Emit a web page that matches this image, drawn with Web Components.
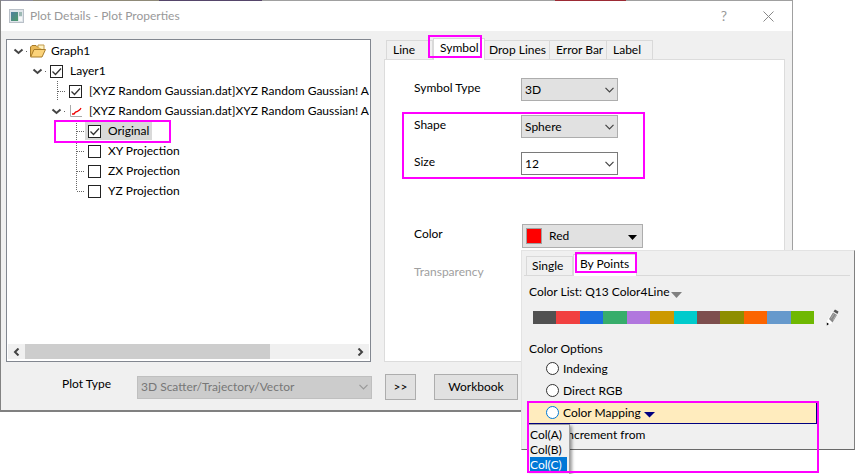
<!DOCTYPE html>
<html lang="en">
<head>
<meta charset="utf-8">
<title>Plot Details - Plot Properties</title>
<style>
  body { margin: 0; min-height: 100vh; background: #fff; color: #000; font: 12px/16px Lato, "Open Sans", sans-serif; }
</style>
</head>
<body>
<plot-dialog></plot-dialog>
<script>
const base = `
  *, *::before, *::after { box-sizing: border-box; }
  button, select, input { font: inherit; color: inherit; margin: 0; border-radius: 0; }
  button { padding: 0; border: 0; background: none; }
  svg { display: block; flex: none; }
`;
function define(name, html, setup) {
  customElements.define(name, class extends HTMLElement {
    connectedCallback() {
      if (this.shadowRoot) return;
      const t = document.createElement('template');
      t.innerHTML = typeof html === 'function' ? html(this) : html;
      this.attachShadow({ mode: 'open' }).append(t.content.cloneNode(true));
      if (setup) setup(this, this.shadowRoot);
    }
  });
}

/* Magenta frame laid over the content it points out */
define('mark-frame', `<style>
  :host { position: absolute; box-sizing: border-box; border: 2px solid #f0f; pointer-events: none; z-index: 5; }
</style>`);

define('title-bar', `<style>${base}
  :host { display: flex; align-items: center; height: 30px; padding: 0 15px 0 8px; background: #fff; color: #999; }
  h1 { flex: 1; margin: 0 0 0 6px; font: inherit; }
  button { width: 18px; height: 18px; display: grid; place-items: center; font-size: 14px; }
  button + button { margin-left: 26px; }
</style>
<svg width="15" height="14" viewBox="0 0 15 14"><defs><linearGradient id="g" x2="1" y2="1"><stop stop-color="#4f7fa0"/><stop offset="1" stop-color="#4d9a68"/></linearGradient></defs>
<rect x=".5" y=".5" width="14" height="13" fill="#dfe5ea" stroke="#b9c0c8"/><rect x="2" y="3" width="7" height="9" fill="url(#g)"/><rect x="10" y="3" width="3" height="4" fill="#9cb9b4"/><rect x="10" y="8" width="3" height="4" fill="#f6f8f8"/></svg>
<h1><slot></slot></h1>
<button aria-label="Help">?</button>
<button aria-label="Close"><svg width="11" height="11" viewBox="0 0 11 11"><path d="M.5.5l10 10M10.500.5l-10 10" stroke="#888" fill="none"/></svg></button>`);

const chevron = '<svg width="18" height="20" viewBox="0 0 18 20"><path d="M4.500 8.500L8.500 12L12.500 8.500" fill="none" stroke="#444" stroke-width="2"/><path d="M16 10.500h2" stroke="#666" stroke-dasharray="1 1"/></svg>';
const icons = {
  folder: '<svg width="16" height="14" viewBox="0 0 16 14"><path d="M.5 12.500V3L2 1.500h4L7.500 3H13v3" fill="#e9b957" stroke="#a87c2a"/><path d="M8 3V1h6v5" fill="#fff3c4" stroke="#c29a4a"/><path d="M.7 13L4 5.500h11.500L12 13z" fill="#fbd37a" stroke="#a87c2a"/></svg>',
  plot: '<svg width="14" height="12" viewBox="0 0 14 12"><path d="M2.500 0v11.500H14" fill="none" stroke="#aaa"/><path d="M4 9h2l1.500-2 2-.5L12 4.500 13 3" fill="none" stroke="#e00" stroke-width="1.300"/></svg>'
};
define('tree-row', el => {
  const level = +el.getAttribute('level'), leaf = el.hasAttribute('leaf'), last = el.hasAttribute('last');
  const icon = el.getAttribute('icon');
  return `<style>${base}
  :host { display: flex; align-items: center; height: 20px; padding-left: ${3 + 19 * level}px; white-space: nowrap; }
  .item { display: flex; align-items: center; height: 18px; padding: 0 3px 0 2px; }
  :host([selected]) .item { background: #d9d9d9; }
  .lead { display: grid; align-items: center; width: 16px; margin-right: 5px; }
  .lead > * { grid-area: 1 / 1; }
  input { appearance: none; width: 13px; height: 13px; border: 1px solid #222; background: #fff; }
  input, .tick { margin: 0 0 0 1px; }
  .tick { visibility: hidden; pointer-events: none; }
  input:checked + .tick { visibility: visible; }
</style>
${leaf ? `<svg width="18" height="20" viewBox="0 0 18 20"><path d="M9.500 0V${last ? 10 : 20}M10 10.500H18" fill="none" stroke="#666" stroke-dasharray="1 1"/></svg>` : `<button aria-label="Collapse">${chevron}</button>`}
<label class="item"><span class="lead">${icon ? icons[icon] : `<input type="checkbox" ${el.hasAttribute('checked') ? 'checked' : ''}><svg class="tick" width="13" height="13" viewBox="0 0 13 13"><path d="M2.500 6.500l3 3 5.500-6" fill="none" stroke="#333" stroke-width="1.300"/></svg>`}</span><slot></slot></label>`;
});

define('plot-tree', `<style>${base}
  :host { display: flex; flex-direction: column; position: relative; min-width: 0; box-sizing: border-box; border: 1px solid #828790; background: #fff; padding: 1px; }
  .rows { flex: 1; overflow: hidden; margin-left: -1px; }
  .bar { display: flex; height: 15px; background: #f0f0f0; align-items: stretch; margin-bottom: 1px; }
  .bar button { width: 17px; display: grid; place-items: center; }
  .track { flex: 1; }
  .thumb { width: 75%; height: 100%; background: #cdcdcd; }
  mark-frame { left: 47px; top: 80px; width: 117px; height: 23px; }
</style>
<div class="rows">
<tree-row level="0" icon="folder">Graph1</tree-row>
<tree-row level="1" checked>Layer1</tree-row>
<tree-row level="2" leaf checked>[XYZ Random Gaussian.dat]XYZ Random Gaussian! A</tree-row>
<tree-row level="2" icon="plot">[XYZ Random Gaussian.dat]XYZ Random Gaussian! A</tree-row>
<tree-row level="3" leaf checked selected>Original</tree-row>
<tree-row level="3" leaf>XY Projection</tree-row>
<tree-row level="3" leaf>ZX Projection</tree-row>
<tree-row level="3" leaf last>YZ Projection</tree-row>
</div>
<div class="bar"><button aria-label="Scroll left"><svg width="7" height="8" viewBox="0 0 7 8"><path d="M5.500.5L2 4l3.500 3.500" fill="none" stroke="#444" stroke-width="2"/></svg></button>
<div class="track"><div class="thumb"></div></div>
<button aria-label="Scroll right"><svg width="7" height="8" viewBox="0 0 7 8"><path d="M1.500.5L5 4 1.500 7.500" fill="none" stroke="#444" stroke-width="2"/></svg></button></div>
<mark-frame></mark-frame>`);

define('tab-item', `<style>${base}
  :host { display: block; position: relative; height: 19px; }
  button { width: 100%; height: 100%; padding-left: var(--tab-pad, 6px); text-align: left; white-space: nowrap; border: 1px solid #d9d9d9; border-bottom: 0; background: #f0f0f0; }
  :host([follow]) button { border-left: 0; }
  :host([selected]) { height: 22px; margin-bottom: -1px; z-index: 1; }
  :host([selected]) button { background: #fff; padding-bottom: 3px; }
</style><button role="tab"><slot></slot></button><slot name="frame"></slot>`);

define('select-box', el => `<style>${base}
  :host { display: grid; height: 23px; align-items: center; }
  :host > *, select, input, svg { grid-area: 1 / 1; }
  select, input { appearance: none; width: 100%; height: 100%; padding: 0 20px 0 3px; border: 1px solid #adadad; background: #e1e1e1; outline: 0; }
  input { background: #fff; border-color: #7a7a7a; }
  select:disabled { background: #ccc; border-color: #bfbfbf; color: #777; opacity: 1; }
  svg { justify-self: end; margin-right: 4px; pointer-events: none; color: #444; }
  :host([disabled]) svg { color: #999; }
</style>
${el.hasAttribute('editable') ? `<input type="text" value="${el.getAttribute('value')}" aria-label="${el.getAttribute('label')}">`
 : `<select aria-label="${el.getAttribute('label')}" ${el.hasAttribute('disabled') ? 'disabled' : ''}><option>${el.getAttribute('value')}</option></select>`}
<svg width="9" height="6" viewBox="0 0 9 6"><path d="M.5.800l4 4 4-4" fill="none" stroke="currentColor" stroke-width="1.200"/></svg>`);

define('form-row', `<style>
  :host { display: grid; grid-template-columns: 107px auto; justify-content: start; min-height: 23px; }
  label { padding-top: 2px; }
  :host([muted]) label { color: #a0a0a0; }
</style><label><slot name="label"></slot></label><slot></slot>`);

define('radio-row', el => `<style>${base}
  :host { display: flex; align-items: center; height: 22px; padding-left: 17px; border: solid transparent; border-width: 0 1px 1px 0; box-sizing: border-box; }
  :host([active]) { background: #ffecbe; border-color: #000080; }
  label { display: flex; align-items: center; gap: 4px; }
  input { appearance: none; width: 13px; height: 13px; border: 1px solid #333; border-radius: 50%; background: #fff; }
  :host([active]) input { border-color: #0078d7; }
  svg { margin: 4px 0 0 3px; }
</style><label><input type="radio" name="color-option"><slot></slot></label>
${el.hasAttribute('active') ? '<svg width="11" height="6" viewBox="0 0 11 6"><path d="M0 0h11L5.500 5.500z" fill="#000080"/></svg>' : ''}`);

define('color-popup', el => `<style>${base}
  :host { display: block; position: absolute; z-index: 3; background: #f0f0f0; border: 1px solid; border-color: #e3e3e3 #808080 #696969 #e3e3e3; box-sizing: border-box; padding: 2px 4px 6px 2px; }
  .tabs { display: flex; align-items: flex-end; height: 23px; padding-left: 2px; border-bottom: 1px solid #d9d9d9; }
  .body { padding: 8px 33px 0 5px; }
  .list { display: flex; align-items: center; }
  .list svg { margin: 5px 0 0 2px; }
  .list button { display: flex; align-items: center; }
  .palette { display: flex; align-items: center; margin: 8px -30px 0 4px; height: 18px; }
  .strip { display: flex; flex: 1; height: 13px; }
  .strip i { flex: 1; }
  .palette button { margin: 0 8px 0 12px; }
  .heading { margin: 15px 0 1px; }
  .options { position: relative; }
  .under { padding-left: 35px; margin-top: 3px; }
  .menu { position: absolute; left: 0; top: 66px; width: 41px; padding: 2px 2px 2px 1px; background: #f0f0f0; border: 1px solid #a0a0a0; border-left: 0; box-shadow: 2px 2px 3px #0006; line-height: 15px; display: grid; }
  .menu button { height: 15px; text-align: left; }
  .menu .on { background: #0078d7; color: #fff; }
  tab-item mark-frame { left: 2px; top: -2px; width: 62px; height: 21px; }
  .options > mark-frame { left: -2px; top: 43px; width: calc(100% + 4px); height: 72px; }
</style>
<div class="tabs" role="tablist"><tab-item style="width:47px;--tab-pad:5px">Single</tab-item><tab-item selected style="width:64px;--tab-pad:6px">By Points<mark-frame slot="frame"></mark-frame></tab-item></div>
<div class="body">
<div class="list"><button>Color List: Q13 Color4Line<svg width="11" height="6" viewBox="0 0 11 6"><path d="M0 0h11L5.500 6z" fill="#808080"/></svg></button></div>
<div class="palette"><span class="strip">${['#515151','#f14040','#1a6fdf','#37ad6b','#b177de','#cc9900','#00cbcc','#7d4e4e','#8e8e00','#fb6501','#6699cc','#6fb802'].map(c => `<i style="background:${c}"></i>`).join('')}</span>
<button aria-label="Edit colors"><svg width="13" height="17" viewBox="0 0 13 17"><path d="M1 12L6 3l5 3-5.500 8.500L1 16z" fill="#fff"/><path d="M3 10L7 3.500l4 2.500-4.500 7.500z" fill="#888"/><path d="M7.500 2.500L9 .5l3.500 2L11.500 5z" fill="#555"/><path d="M5 9.500l3-5M7 11l3-5" stroke="#bbb" stroke-width=".7"/><path d="M.8 13.500L3 15 .8 16.500z" fill="#000"/></svg></button></div>
<div class="heading">Color Options</div>
<div class="options">
<radio-row>Indexing</radio-row><radio-row>Direct RGB</radio-row><radio-row active>Color Mapping</radio-row>
<div class="under">Increment from</div>
<div class="menu"><button>Col(A)</button><button>Col(B)</button><button class="on">Col(C)</button></div>
<mark-frame></mark-frame>
</div></div>`);

define('color-field', `<style>${base}
  :host { display: block; position: relative; margin-left: 1px; }
  .pick { display: flex; align-items: center; width: 121px; height: 24px; padding: 0 5px 0 3px; border: 1px solid #adadad; background: #e1e1e1; text-align: left; }
  i { width: 16px; height: 16px; margin-right: 7px; background: red; border: 1px solid #a0a0a0; }
  span { flex: 1; }
  svg { margin-top: 3px; }
  color-popup { left: -1px; top: 26px; width: 334px; }
</style><button class="pick" aria-label="Color"><i></i><span>Red</span><svg width="9" height="5" viewBox="0 0 9 5"><path d="M0 0h9L4.500 5z"/></svg></button><color-popup></color-popup>`);

define('symbol-page', `<style>${base}
  :host { display: flex; flex-direction: column; min-width: 0; padding-top: 1px; }
  .tabs { display: flex; align-items: flex-end; padding-left: 2px; height: 19px; position: relative; z-index: 1; }
  .panel { position: relative; flex: 1; display: flex; flex-direction: column; gap: 14px; padding: 18px 29px; border: 1px solid #dcdcdc; background: #fff; }
  select-box { width: 97px; }
  .color { margin-top: 35px; }
  .panel > mark-frame { left: 17px; top: 52px; width: 243px; height: 67px; }
  tab-item mark-frame { left: -5px; top: -3px; width: 54px; height: 23px; }
</style>
<div class="tabs" role="tablist">
<tab-item style="width:47px">Line</tab-item><tab-item selected style="width:52px">Symbol<mark-frame slot="frame"></mark-frame></tab-item><tab-item follow style="width:65px;--tab-pad:4px">Drop Lines</tab-item><tab-item follow style="width:57px">Error Bar</tab-item><tab-item follow style="width:46px">Label</tab-item></div>
<div class="panel">
<form-row><span slot="label">Symbol Type</span><select-box label="Symbol Type" value="3D"></select-box></form-row>
<form-row><span slot="label">Shape</span><select-box label="Shape" value="Sphere"></select-box></form-row>
<form-row><span slot="label">Size</span><select-box label="Size" editable value="12"></select-box></form-row>
<form-row class="color"><span slot="label">Color</span><color-field></color-field></form-row>
<form-row muted><span slot="label">Transparency</span></form-row>
<mark-frame></mark-frame>
</div>`);

define('plot-dialog', `<style>${base}
  :host { display: block; margin-right: 62px; background: #f0f0f0; border: 1px solid #a0a0a0; border-top: 0; border-left-color: #828282; border-bottom: 2px solid #808080; }
  .edge { height: 1px; background: linear-gradient(90deg, #8c8c9c 4%, #8f8a78 4% 20%, #55456a 20% 33%, #a0a0a0 33% 70%, #9c2a34 70% 79%, #a0a0a0 79%); }
  main { display: grid; grid-template-columns: minmax(0, 365fr) minmax(0, 401fr); column-gap: 13px; min-height: 323px; margin: 8px 7px 0 5px; }
  footer { display: flex; align-items: center; padding: 12px 7px 10px 61px; }
  .type { padding-bottom: 6px; width: 75px; }
  select-box { width: 235px; }
  button { height: 26px; border: 1px solid #adadad; background: #e1e1e1; }
  .more { width: 31px; margin: 0 18px 0 13px; }
  .book { width: 84px; }
</style>
<div class="edge"></div>
<title-bar>Plot Details - Plot Properties</title-bar>
<main><plot-tree></plot-tree><symbol-page></symbol-page></main>
<footer><span class="type">Plot Type</span><select-box disabled label="Plot Type" value="3D Scatter/Trajectory/Vector"></select-box><button class="more">&gt;&gt;</button><button class="book">Workbook</button></footer>`);
</script>
</body>
</html>
